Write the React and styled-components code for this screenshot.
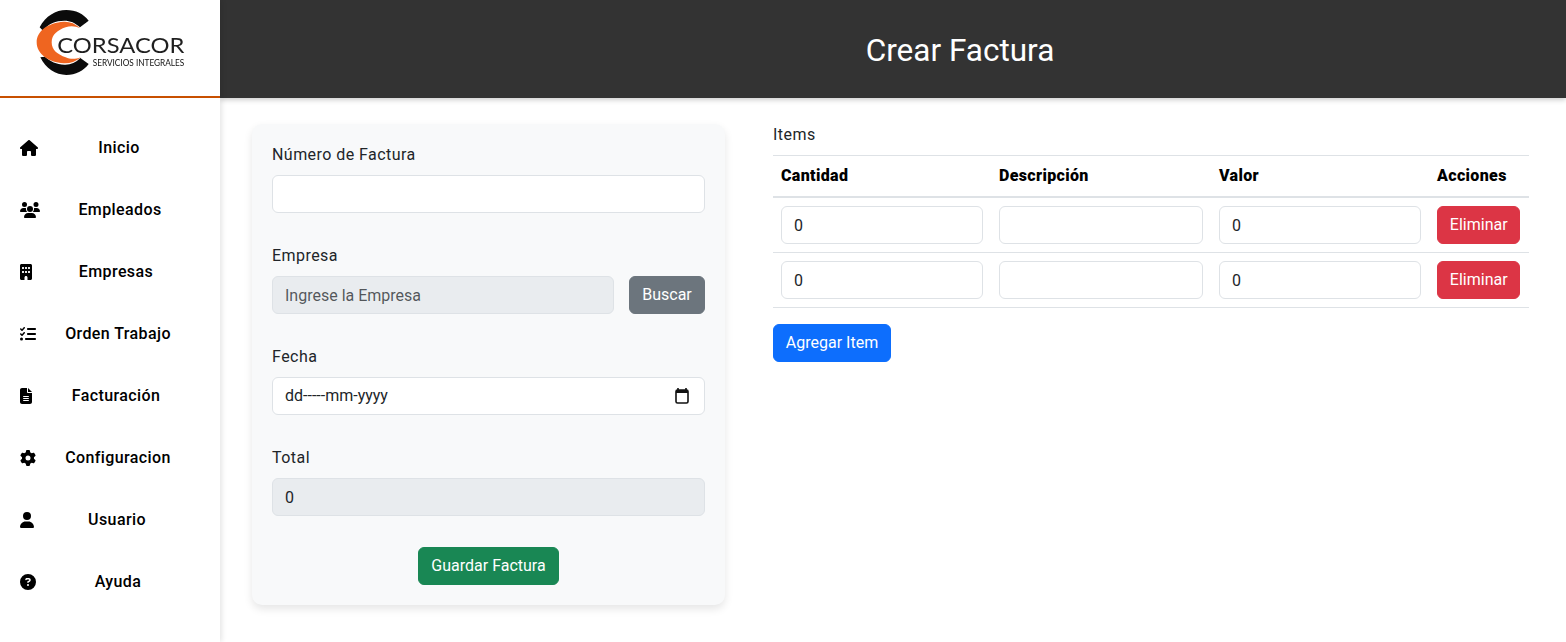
import React from "react";
import styled, { createGlobalStyle } from "styled-components";
import { FaHouse, FaUsers, FaBuilding, FaListCheck, FaFileLines, FaGear, FaUser, FaCircleQuestion } from "react-icons/fa6";

const menuItems = [
    { label: "Inicio", Icon: FaHouse, width: 18 },
    { label: "Empleados", Icon: FaUsers, width: 20 },
    { label: "Empresas", Icon: FaBuilding, width: 12 },
    { label: "Orden Trabajo", Icon: FaListCheck, width: 16 },
    { label: "Facturación", Icon: FaFileLines, width: 12 },
    { label: "Configuracion", Icon: FaGear, width: 16 },
    { label: "Usuario", Icon: FaUser, width: 14 },
    { label: "Ayuda", Icon: FaCircleQuestion, width: 16 },
];

const Logo = () => (
    <LogoArt width="170" height="85" viewBox="0 0 510 255">
        <path d="M44 82 C62 48 92 30 124 30 C152 30 176 42 191 62 L165 82 C150 68 136 62 118 62 C92 62 72 70 54 92 Z" fill="#0b0b0b" />
        <path d="M46 172 C62 206 92 225 124 225 C152 225 176 212 191 192 L166 174 C152 188 136 195 118 194 C94 193 76 184 60 170 Z" fill="#0b0b0b" />
        <path d="M166 85 C150 70 134 64 116 65 C70 68 35 92 35 127 C35 162 70 187 116 190 C134 191 150 186 168 172 C150 178 136 178 122 172 C98 164 80 150 80 127 C80 104 98 90 122 82 C136 77 152 78 166 85 Z" fill="#ef6520" />
        <text x="97" y="160" fontFamily="Lato, sans-serif" fontSize="66" fill="#1f1f1f" textLength="381" lengthAdjust="spacingAndGlyphs">CORSACOR</text>
        <text x="203" y="197" fontFamily="Lato, sans-serif" fontSize="26" fill="#111" textLength="275" lengthAdjust="spacingAndGlyphs">SERVICIOS INTEGRALES</text>
    </LogoArt>
);

const CalendarIcon = () => (
    <svg width="14" height="16" viewBox="0 0 14 16">
        <path d="M3 0v2M11 0v2" stroke="#111" strokeWidth="1.6" />
        <rect x="1" y="2" width="12" height="13" rx="1.5" fill="none" stroke="#111" strokeWidth="1.6" />
        <rect x="1" y="2" width="12" height="3" fill="#111" />
    </svg>
);

const ItemRow = () => (
    <tr>
        <Cell><Input defaultValue="0" /></Cell>
        <Cell><Input /></Cell>
        <Cell><Input defaultValue="0" /></Cell>
        <Cell><Button $color="#dc3545">Eliminar</Button></Cell>
    </tr>
);

const App = () => {
    return (
        <Page>
            <GlobalStyle />
            <Sidebar>
                <LogoBox><Logo /></LogoBox>
                <Menu>
                    {menuItems.map(({ label, Icon, width }) => (
                        <MenuItem key={label}>
                            <IconSlot $width={width}><Icon /></IconSlot>
                            <MenuLabel>{label}</MenuLabel>
                        </MenuItem>
                    ))}
                </Menu>
            </Sidebar>
            <Main>
                <Header>
                    <Title>Crear Factura</Title>
                </Header>
                <Content>
                    <FormCard>
                        <Field>
                            <Label>Número de Factura</Label>
                            <Input />
                        </Field>
                        <Field>
                            <Label>Empresa</Label>
                            <SearchRow>
                                <Input disabled placeholder="Ingrese la Empresa" />
                                <SearchButton $color="#6c757d">Buscar</SearchButton>
                            </SearchRow>
                        </Field>
                        <Field>
                            <Label>Fecha</Label>
                            <DateBox>
                                dd-----mm-yyyy
                                <CalendarIcon />
                            </DateBox>
                        </Field>
                        <Field>
                            <Label>Total</Label>
                            <Input disabled defaultValue="0" />
                        </Field>
                        <Actions>
                            <Button $color="#198754">Guardar Factura</Button>
                        </Actions>
                    </FormCard>
                    <ItemsPanel>
                        <ItemsTitle>Items</ItemsTitle>
                        <Table>
                            <thead>
                                <tr>
                                    <HeadCell $width={218}>Cantidad</HeadCell>
                                    <HeadCell $width={220}>Descripción</HeadCell>
                                    <HeadCell $width={218}>Valor</HeadCell>
                                    <HeadCell $width={100}>Acciones</HeadCell>
                                </tr>
                            </thead>
                            <tbody>
                                <ItemRow />
                                <ItemRow />
                            </tbody>
                        </Table>
                        <Button $color="#0d6efd">Agregar Item</Button>
                    </ItemsPanel>
                </Content>
            </Main>
        </Page>
    );
};

export default App;

const GlobalStyle = createGlobalStyle`
    * {
        box-sizing: border-box;
    }

    body {
        margin: 0;
        font-family: Roboto, "Liberation Sans", sans-serif;
        font-size: 16px;
        line-height: 1.5;
        color: #212529;
        background: #fff;
    }
`;

const Page = styled.div`
    display: flex;
    height: 642px;
    overflow: hidden;
`;

const Sidebar = styled.aside`
    position: relative;
    z-index: 2;
    flex: 0 0 220px;
    background: #fff;
    box-shadow: 2px 0 5px rgba(0, 0, 0, 0.1);
`;

const LogoBox = styled.div`
    display: flex;
    height: 98px;
    padding-left: 25px;
    border-bottom: 2px solid #c85000;
`;

const LogoArt = styled.svg`
    filter: blur(0.3px);
`;

const Menu = styled.nav`
    display: flex;
    flex-direction: column;
    padding: 19px 20px 0;
`;

const MenuItem = styled.div`
    display: flex;
    align-items: center;
    height: 62px;
    color: #000;
    font-size: 16px;
`;

const IconSlot = styled.span`
    flex: none;
    display: flex;
    width: ${(p) => p.$width}px;
    height: 16px;

    svg {
        width: 100%;
        height: 100%;
    }
`;

const MenuLabel = styled.span`
    flex: 1;
    text-align: center;
    font-weight: 500;
    letter-spacing: 0.4px;
`;

const Main = styled.main`
    flex: 1;
    min-width: 0;
`;

const Header = styled.header`
    display: flex;
    justify-content: center;
    align-items: center;
    height: 98px;
    padding: 3px 0 0 134px;
    background: #333;
    box-shadow: 0 2px 5px rgba(0, 0, 0, 0.2);
`;

const Title = styled.h1`
    margin: 0;
    color: #fff;
    font-size: 31.5px;
    font-weight: 400;
`;

const Content = styled.div`
    display: flex;
    align-items: flex-start;
    gap: 48px;
    padding: 24px 37px 0 32px;
`;

const FormCard = styled.form`
    flex: 0 0 473px;
    margin-top: 2px;
    padding: 19px 20px 20px;
    background: #f8f9fa;
    border-radius: 10px;
    box-shadow: 0 4px 8px rgba(0, 0, 0, 0.1);
`;

const Field = styled.div`
    margin-bottom: 31px;
`;

const Label = styled.label`
    display: block;
    margin-bottom: 8px;
    letter-spacing: 0.45px;
`;

const Input = styled.input`
    display: block;
    width: 100%;
    height: 38px;
    padding: 6px 12px;
    font: inherit;
    color: #212529;
    background: ${(p) => (p.disabled ? "#e9ecef" : "#fff")};
    border: 1px solid #dee2e6;
    border-radius: 6px;

    &::placeholder {
        color: rgba(33, 37, 41, 0.75);
        opacity: 1;
    }
`;

const DateBox = styled.div`
    display: flex;
    justify-content: space-between;
    align-items: center;
    height: 38px;
    padding: 6px 15px 6px 12px;
    background: #fff;
    border: 1px solid #dee2e6;
    border-radius: 6px;
`;

const SearchRow = styled.div`
    display: flex;
    gap: 15px;
`;

const Button = styled.button.attrs({ type: "button" })`
    flex: none;
    height: 38px;
    padding: 6px 11.85px;
    font: inherit;
    color: #fff;
    background: ${(p) => p.$color};
    border: 1px solid ${(p) => p.$color};
    border-radius: 6px;
`;

const SearchButton = styled(Button)`
    width: 76px;
`;

const Actions = styled.div`
    display: flex;
    justify-content: center;
`;

const ItemsPanel = styled.section`
    flex: 1;
    min-width: 0;
`;

const ItemsTitle = styled.div`
    margin: 1px 0 8px;
    letter-spacing: 0.45px;
`;

const Table = styled.table`
    width: 100%;
    margin-bottom: 16px;
    table-layout: fixed;
    border-collapse: collapse;
    border-top: 1px solid #dee2e6;
`;

const HeadCell = styled.th`
    width: ${(p) => p.$width}px;
    padding: 8px;
    text-align: left;
    font-weight: 900;
    letter-spacing: 0.35px;
    color: #000;
    border-bottom: 2px solid #dee2e6;
`;

const Cell = styled.td`
    padding: 8px;
    border-bottom: 1px solid #dee2e6;
`;
